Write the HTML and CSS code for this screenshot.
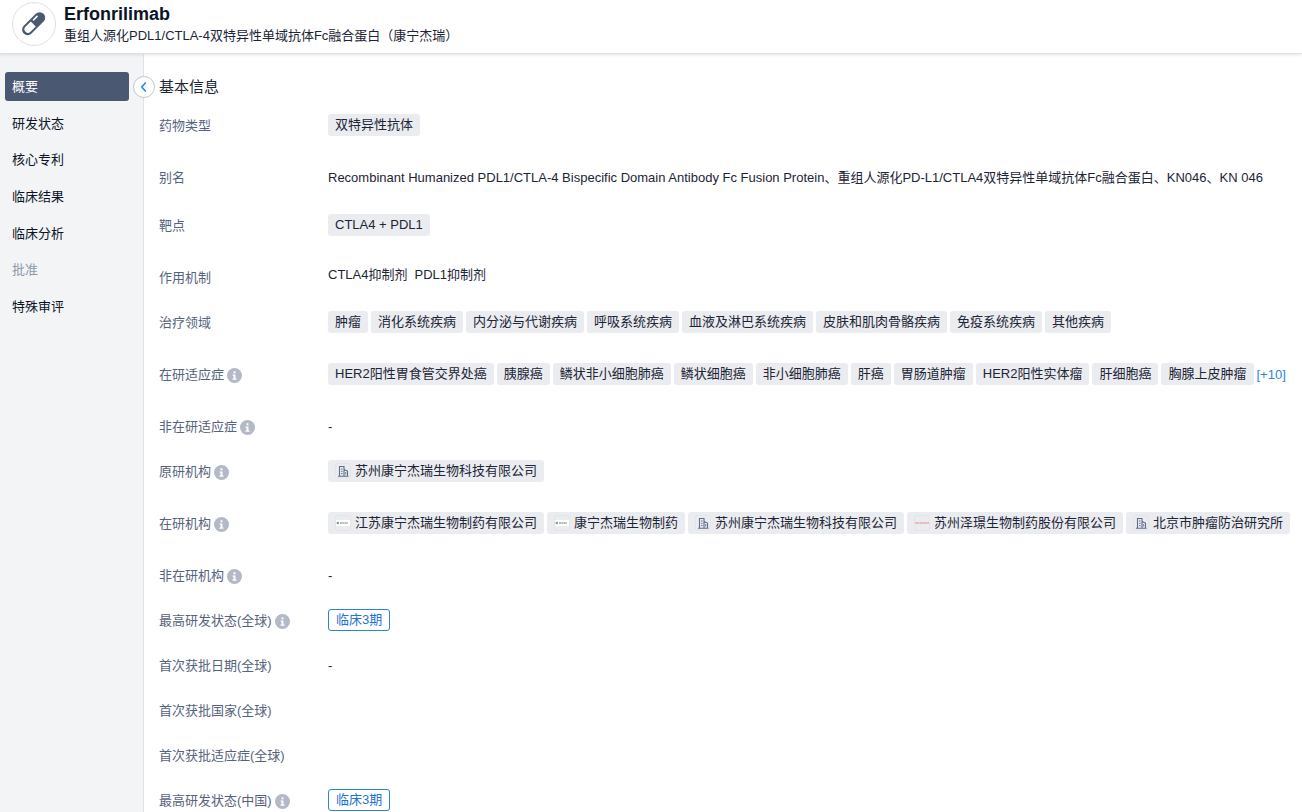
FILE: index.html
```html
<!DOCTYPE html>
<html lang="zh-CN">
    <head>
        <meta charset="utf-8">
        <title>Erfonrilimab</title>
        <link rel="stylesheet" href="styles.css">
    </head>
    <body>
        <svg class="sprite" aria-hidden="true">
            <symbol id="icon-info" viewBox="0 0 16 16">
                <circle cx="8" cy="8" r="8" fill="#b3b9c7"/>
                <rect x="7" y="3.5" width="2" height="2.2" fill="#fff"/>
                <path d="M6 7h3v4.2h1.2v1.2H5.8v-1.2H7V8.2H6z" fill="#fff"/>
            </symbol>
            <symbol id="icon-building" viewBox="0 0 14 14">
                <path d="M3.5 12V2.5h4.5V12M8 5.5l3.5 1.5v5M2 12.3h10.5" fill="none" stroke="#5d6c8b" stroke-width="1.1"/>
                <path d="M5 5h1.6M5 7.3h1.6M5 9.6h1.6M9.7 8v2.5" fill="none" stroke="#5d6c8b" stroke-width=".9"/>
            </symbol>
            <symbol id="icon-alphamab" viewBox="0 0 14 14">
                <rect x="0" y="4" width="14" height="6" fill="#fff"/>
                <circle cx="1.8" cy="7" r="1.3" fill="#6bab8c"/>
                <path d="M4 7h8" stroke="#777" stroke-width="1.2" stroke-dasharray="2 .4"/>
            </symbol>
            <symbol id="icon-zelgen" viewBox="0 0 14 14">
                <path d="M0 7h14" stroke="#e58b91" stroke-width="1.2" stroke-dasharray="4 .3"/>
            </symbol>
        </svg>
        <header class="header">
            <div class="drug-icon">
                <svg width="30" height="30" viewBox="0 0 30 30">
                    <g transform="rotate(-45 15 15)">
                        <rect x="1" y="9" width="28" height="11" rx="5.5" fill="#4a5872"/>
                        <path d="M14.5 11H7a3.5 3.5 0 0 0 0 7h7.5z" fill="#fff"/>
                        <path d="M17.5 11.8h5" stroke="#fff" stroke-width="1.6" stroke-linecap="round"/>
                    </g>
                </svg>
            </div>
            <div>
                <h1 class="title">Erfonrilimab</h1>
                <p class="subtitle">重组人源化PDL1/CTLA-4双特异性单域抗体Fc融合蛋白（康宁杰瑞）</p>
            </div>
        </header>
        <div class="container">
            <div class="sidebar">
                <nav class="menu">
                    <a class="menu-item active" href="#basic">概要</a>
                    <a class="menu-item" href="#status">研发状态</a>
                    <a class="menu-item" href="#patent">核心专利</a>
                    <a class="menu-item" href="#result">临床结果</a>
                    <a class="menu-item" href="#analysis">临床分析</a>
                    <a class="menu-item disabled" aria-disabled="true">批准</a>
                    <a class="menu-item" href="#review">特殊审评</a>
                </nav>
                <button class="collapse" type="button" aria-label="收起">
                    <svg width="10" height="10" viewBox="0 0 10 10"><path d="M6.8 0.5L2.8 5l4 4.5" fill="none" stroke="#2f86dc" stroke-width="1.6"/></svg>
                </button>
            </div>
            <main class="main" id="basic">
                <h2 class="section-title">基本信息</h2>
                <dl class="info">
                    <div class="row tall">
                        <dt>药物类型</dt>
                        <dd class="tags"><span class="tag">双特异性抗体</span></dd>
                    </div>
                    <div class="row alias">
                        <dt>别名</dt>
                        <dd>Recombinant Humanized PDL1/CTLA-4 Bispecific Domain Antibody Fc Fusion Protein、重组人源化PD-L1/CTLA4双特异性单域抗体Fc融合蛋白、KN046、KN 046</dd>
                    </div>
                    <div class="row tall">
                        <dt>靶点</dt>
                        <dd class="tags"><span class="tag">CTLA4 + PDL1</span></dd>
                    </div>
                    <div class="row">
                        <dt>作用机制</dt>
                        <dd class="mechanism"><span>CTLA4抑制剂</span><span>PDL1抑制剂</span></dd>
                    </div>
                    <div class="row tall">
                        <dt>治疗领域</dt>
                        <dd class="tags">
                            <span class="tag">肿瘤</span>
                            <span class="tag">消化系统疾病</span>
                            <span class="tag">内分泌与代谢疾病</span>
                            <span class="tag">呼吸系统疾病</span>
                            <span class="tag">血液及淋巴系统疾病</span>
                            <span class="tag">皮肤和肌肉骨骼疾病</span>
                            <span class="tag">免疫系统疾病</span>
                            <span class="tag">其他疾病</span>
                        </dd>
                    </div>
                    <div class="row tall">
                        <dt>在研适应症<svg class="info-icon"><use href="#icon-info"/></svg></dt>
                        <dd class="tags">
                            <span class="tag">HER2阳性胃食管交界处癌</span>
                            <span class="tag">胰腺癌</span>
                            <span class="tag">鳞状非小细胞肺癌</span>
                            <span class="tag">鳞状细胞癌</span>
                            <span class="tag">非小细胞肺癌</span>
                            <span class="tag">肝癌</span>
                            <span class="tag">胃肠道肿瘤</span>
                            <span class="tag">HER2阳性实体瘤</span>
                            <span class="tag">肝细胞癌</span>
                            <span class="tag">胸腺上皮肿瘤</span>
                            <a class="more" href="#more">[+10]</a>
                        </dd>
                    </div>
                    <div class="row">
                        <dt>非在研适应症<svg class="info-icon"><use href="#icon-info"/></svg></dt>
                        <dd>-</dd>
                    </div>
                    <div class="row tall">
                        <dt>原研机构<svg class="info-icon"><use href="#icon-info"/></svg></dt>
                        <dd class="tags">
                            <span class="tag"><svg class="logo"><use href="#icon-building"/></svg>苏州康宁杰瑞生物科技有限公司</span>
                        </dd>
                    </div>
                    <div class="row tall">
                        <dt>在研机构<svg class="info-icon"><use href="#icon-info"/></svg></dt>
                        <dd class="tags">
                            <span class="tag"><svg class="logo"><use href="#icon-alphamab"/></svg>江苏康宁杰瑞生物制药有限公司</span>
                            <span class="tag"><svg class="logo"><use href="#icon-alphamab"/></svg>康宁杰瑞生物制药</span>
                            <span class="tag"><svg class="logo"><use href="#icon-building"/></svg>苏州康宁杰瑞生物科技有限公司</span>
                            <span class="tag"><svg class="logo"><use href="#icon-zelgen"/></svg>苏州泽璟生物制药股份有限公司</span>
                            <span class="tag"><svg class="logo"><use href="#icon-building"/></svg>北京市肿瘤防治研究所</span>
                        </dd>
                    </div>
                    <div class="row">
                        <dt>非在研机构<svg class="info-icon"><use href="#icon-info"/></svg></dt>
                        <dd>-</dd>
                    </div>
                    <div class="row">
                        <dt>最高研发状态(全球)<svg class="info-icon"><use href="#icon-info"/></svg></dt>
                        <dd class="tags"><span class="tag phase">临床3期</span></dd>
                    </div>
                    <div class="row">
                        <dt>首次获批日期(全球)</dt>
                        <dd>-</dd>
                    </div>
                    <div class="row">
                        <dt>首次获批国家(全球)</dt>
                        <dd></dd>
                    </div>
                    <div class="row">
                        <dt>首次获批适应症(全球)</dt>
                        <dd></dd>
                    </div>
                    <div class="row">
                        <dt>最高研发状态(中国)<svg class="info-icon"><use href="#icon-info"/></svg></dt>
                        <dd class="tags"><span class="tag phase">临床3期</span></dd>
                    </div>
                </dl>
            </main>
        </div>
    </body>
</html>
```
FILE: styles.css
```css
* {
    box-sizing: border-box;
}

body {
    margin: 0;
    display: flex;
    flex-direction: column;
    height: 100vh;
    font-family: "Liberation Sans", Arial, "Noto Sans CJK SC", sans-serif;
    font-size: 13px;
    color: #1c2536;
    background-color: #fff;
}

.sprite {
    position: absolute;
    width: 0;
    height: 0;
}

.header {
    position: relative;
    z-index: 2;
    display: flex;
    flex-shrink: 0;
    gap: 8px;
    height: 54px;
    padding: 2px 12px;
    background-color: #fff;
    border-bottom: 1px solid #dfe1e5;
    box-shadow: 0 1px 3px rgba(0, 0, 0, 0.1);
}

.drug-icon {
    display: flex;
    align-items: center;
    justify-content: center;
    width: 44px;
    height: 44px;
    border: 1px solid #dfe1e6;
    border-radius: 50%;
}

.title {
    margin: 0;
    font-size: 18px;
    line-height: 24px;
    color: #0b1426;
}

.subtitle {
    margin: 0;
    line-height: 20px;
}

.container {
    display: flex;
    flex: 1;
    min-height: 0;
}

.sidebar {
    position: relative;
    flex-shrink: 0;
    width: 144px;
    padding: 18px 14px 0 5px;
    background-color: #f3f4f6;
    border-right: 1px solid #dfe2e6;
}

.menu {
    display: flex;
    flex-direction: column;
    justify-content: space-between;
    min-height: 249px;
}

.menu-item {
    padding: 0 7px;
    line-height: 29px;
    color: #0b1426;
    text-decoration: none;
    border-radius: 3px;
}

.menu-item.active {
    color: #fff;
    background-color: #4a5872;
}

.menu-item.disabled {
    color: #8d98ab;
}

/* sits on the line between menu and content */
.collapse {
    position: absolute;
    top: 22px;
    right: -12px;
    z-index: 1;
    display: flex;
    align-items: center;
    justify-content: center;
    width: 22px;
    height: 22px;
    padding: 0;
    background-color: #fff;
    border: 1px solid #c0c6d2;
    border-radius: 50%;
    cursor: pointer;
}

.main {
    flex: 1;
    min-width: 0;
    padding: 21px 0 0 15px;
    overflow: auto;
    scrollbar-width: none;
}

.section-title {
    margin: 0 0 15px;
    font-size: 15px;
    font-weight: normal;
    line-height: 24px;
}

.info {
    margin: 0;
}

.row {
    display: flex;
    align-items: flex-start;
    margin-bottom: 21px;
    line-height: 24px;
    white-space: nowrap;
}

.row.tall {
    margin-bottom: 28px;
}

.row.alias {
    margin-bottom: 24px;
}

.row dt {
    display: flex;
    flex-shrink: 0;
    align-items: center;
    gap: 3px;
    width: 169px;
    height: 24px;
    color: #56637d;
}

.row dd {
    margin: 0;
}

.info-icon {
    width: 15px;
    height: 15px;
}

.row .tags {
    display: flex;
    gap: 3px;
}

.row .mechanism {
    display: flex;
    gap: 7px;
    line-height: 18px;
}

.tag {
    display: flex;
    align-items: center;
    gap: 4px;
    height: 22px;
    padding: 0 7px;
    background-color: #ebecf0;
    border-radius: 3px;
}

.phase {
    color: #1f74d4;
    background-color: #fff;
    border: 1px solid #2f80d8;
}

.logo {
    width: 16px;
    height: 16px;
    border: 1px solid #e3e5ea;
    border-radius: 3px;
}

.more {
    color: #2f86dc;
    text-decoration: none;
}
```
